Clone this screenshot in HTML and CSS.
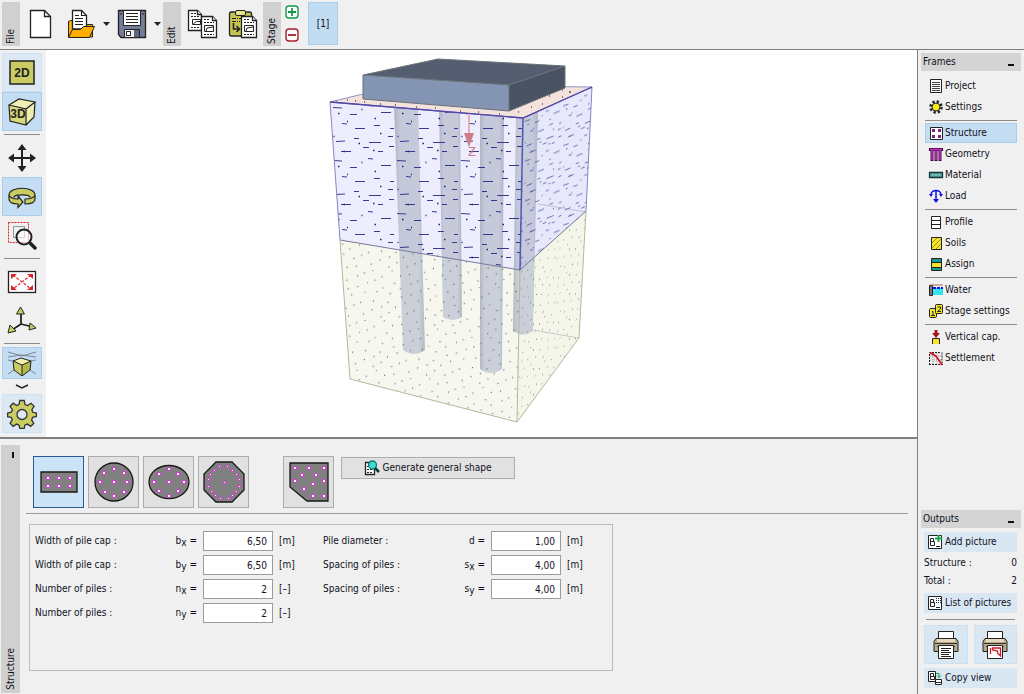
FILE: index.html
```html
<!DOCTYPE html>
<html lang="en">
<head>
<meta charset="utf-8">
<title>Pile group</title>
<link rel="stylesheet" href="styles.css">
</head>
<body>
<header class="toolbar">
  <span class="tab">File</span>
  <div class="tools">
    <button class="tool" aria-label="New"><svg width="40" height="40" viewBox="0 0 40 40"><path d="M9.500 6.500h14l6 6v21h-20z" fill="#fff" stroke="#222" stroke-width="1.300"/><path d="M23.500 6.500v6h6" fill="none" stroke="#222" stroke-width="1.300"/></svg></button>
    <button class="tool" aria-label="Open"><svg width="40" height="40" viewBox="0 0 40 40"><path d="M7.500 33V17.500l2-1h4l3 4h15V33z" fill="#ffae00" stroke="#222"/><path d="M11.500 25V6.500h9l5 5V25z" fill="#fff" stroke="#222" stroke-width="1.300"/><path d="M20.500 6.500v5h5M14 11.500h4m-4 3h8m-8 3h8m-8 3h8" fill="none" stroke="#222" stroke-width="1.200"/><path d="M7.500 33.500l4-8h8l3-3h11l-5 11z" fill="#ffae00" stroke="#222"/></svg></button>
    <button class="drop" aria-label="Open recent"><svg width="7" height="4"><path d="M0 0h7L3.500 4z" fill="#222"/></svg></button>
    <button class="tool" aria-label="Save"><svg width="40" height="40" viewBox="0 0 40 40"><path d="M6.500 6.500h27v27H9l-2.500-3z" fill="#757c98" stroke="#222" stroke-width="1.300"/><path d="M11.500 6.500h17v15h-17z" fill="#fff" stroke="#222"/><path d="M14 9.500h12m-12 3h12m-12 3h12m-12 3h12" stroke="#222"/><path d="M12.500 25.500h15v8h-15z" fill="#eee" stroke="#222"/><path d="M14.500 27.500h4v4h-4z" fill="#fff" stroke="#222"/><path d="M22 26h5v7h-5z" fill="#5f6682"/><path d="M9 9v2m22-2v2" stroke="#222"/></svg></button>
    <button class="drop" aria-label="Save as"><svg width="7" height="4"><path d="M0 0h7L3.500 4z" fill="#222"/></svg></button>
  </div>
  <span class="tab">Edit</span>
  <div class="tools">
    <button class="tool" aria-label="Copy"><svg width="40" height="40" viewBox="0 0 40 40"><g fill="#fff" stroke="#222" stroke-width="1.300"><path d="M5.500 6.500h9l4 4v16h-13z"/><path d="M14.500 6.500v4h4"/></g><path d="M8 9.500h5m-5 3h8m-8 11h8" stroke="#222" stroke-dasharray="2 1"/><path d="M9.500 15.500h8v5h-8zm1 4l3-2h4" fill="none" stroke="#222"/><g fill="#fff" stroke="#222" stroke-width="1.300"><path d="M18.500 12.500h11l4 4v17h-15z"/><path d="M29.500 12.500v4h4"/></g><path d="M21 15.500h6m-6 3h10m-10 12h10" stroke="#222" stroke-dasharray="2 1"/><path d="M21.500 21.500h9v6h-9z" fill="none" stroke="#222"/><path d="M23 27l1-3 6-1" fill="none" stroke="#222"/></svg></button>
    <button class="tool" aria-label="Paste"><svg width="40" height="40" viewBox="0 0 40 40"><rect x="6.500" y="8" width="22" height="24" rx="2" fill="#c6c552" stroke="#222" stroke-width="1.300"/><rect x="12.500" y="6.500" width="10" height="5" rx="1.500" fill="#e4e38c" stroke="#222"/><path d="M9 14.500h17m-17 3h8" stroke="#222" stroke-dasharray="4 1 1 1"/><path d="M10.500 19v6h5m-2-3l3 3-3 3" fill="none" stroke="#222" stroke-width="1.600"/><g fill="#fff" stroke="#222" stroke-width="1.300"><path d="M18.500 12.500h11l4 4v17h-15z"/><path d="M29.500 12.500v4h4"/></g><path d="M21 15.500h6m-6 3h10m-10 12h10" stroke="#222" stroke-dasharray="2 1"/><path d="M21.500 21.500h9v6h-9z" fill="none" stroke="#222"/><path d="M23 27l1-3 6-1" fill="none" stroke="#222"/></svg></button>
  </div>
  <span class="tab">Stage</span>
  <div class="stage-edit">
    <button class="mini" aria-label="Add stage"><svg width="14" height="14"><rect x="1" y="1" width="12" height="12" rx="3" fill="#fff" stroke="#16964a" stroke-width="1.400"/><path d="M3 7h8M7 3v8" stroke="#16964a" stroke-width="1.800"/></svg></button>
    <button class="mini" aria-label="Remove stage"><svg width="14" height="14"><rect x="1" y="1" width="12" height="12" rx="3" fill="#fff" stroke="#a5202c" stroke-width="1.400"/><path d="M3 7h8" stroke="#a5202c" stroke-width="1.800"/></svg></button>
  </div>
  <button class="stage-button">[1]</button>
</header>

<div class="body">
  <main class="work">
    <div class="upper">
      <nav class="side" aria-label="View tools">
        <button class="view soft" aria-label="2D view"><svg width="30" height="30" viewBox="0 0 30 30"><rect x="3" y="3" width="24" height="23" fill="#c9cb63" stroke="#222" stroke-width="1.500"/><text x="15" y="19" class="icon-text">2D</text></svg></button>
        <button class="view on" aria-label="3D view"><svg width="30" height="30" viewBox="0 0 30 30"><path d="M2 8l17 4v16L3 24z" fill="#d8d97c"/><path d="M2 8l10-6 16 3-9 7z" fill="#f0efb5"/><path d="M19 12l9-7-1 15-8 8z" fill="#eeecae"/><path d="M2 8l17 4v16L3 24zM2 8l10-6 16 3-9 7M28 5l-1 15-8 8" fill="none" stroke="#222" stroke-width="1.200"/><text x="11" y="21" class="icon-text">3D</text></svg></button>
        <hr>
        <button class="view" aria-label="Pan"><svg width="30" height="30" viewBox="0 0 30 30"><path d="M15 5v20M5 15h20" stroke="#222" stroke-width="2"/><path d="M15 1l4.500 6h-9zm0 28l4.500-6h-9zM1 15l6-4.500v9zm28 0l-6-4.500v9z" fill="#222"/></svg></button>
        <button class="view on" aria-label="Rotate"><svg width="30" height="30" viewBox="0 0 30 30"><path d="M2 13c0-9 26-9 26 0v4c0 3-4 5-10 5v-5c3 0 5-1 5-1.500C23 12 7 12 7 15.500c0 .5 2 1.500 4 1.500v-3l5 6-5 5.500V22c-6 0-9-2-9-5z" fill="#c9cb63"/><path d="M7 15.500C7 12 23 12 23 15.500c0 .5-1 1.500-5 1.500v-1H11v1c-2 0-4-1-4-1.500z" fill="#c4ddf3"/><path d="M2 13c0-9 26-9 26 0v4c0 3-4 5-10 5v-5c6 0 10-2 10-4M2 13c0 2 4 4 9 4v-3l5 6-5 5.500V22c-6 0-9-2-9-5zM7 15.500c0-3.500 16-3.500 16 0" fill="none" stroke="#222" stroke-width="1.200"/></svg></button>
        <button class="view" aria-label="Zoom window"><svg width="30" height="30" viewBox="0 0 30 30"><rect x="1.500" y="1.500" width="20" height="20" fill="none" stroke="#e0202c" stroke-dasharray="2 1"/><rect x="6.500" y="5.500" width="11" height="11" fill="none" stroke="#999"/><circle cx="17" cy="16" r="7.500" fill="#fff" fill-opacity=".6" stroke="#222" stroke-width="2"/><path d="M23 22l5 5" stroke="#222" stroke-width="3.500" stroke-linecap="round"/></svg></button>
        <hr>
        <button class="view" aria-label="Zoom all"><svg width="30" height="30" viewBox="0 0 30 30"><rect x="1.500" y="4.500" width="27" height="21" fill="#fff" stroke="#222" stroke-width="1.300"/><path d="M6 8l18 14M24 8L6 22" stroke="#e0202c" stroke-width="1.200" stroke-dasharray="3 1.500"/><path d="M4 7h6l-6 5zm22 0h-6l6 5zM4 23h6l-6-5zm22 0h-6l6-5z" fill="#e0202c"/></svg></button>
        <button class="view" aria-label="Axes"><svg width="30" height="30" viewBox="0 0 30 30"><path d="M14 5v13L5 24m9-6l12 3" fill="none" stroke="#222" stroke-width="1.800"/><path d="M13.500 1l4 7h-8zM1 27l2-8 6 6zm28-5l-6-5-1 7z" fill="#c9cb63" stroke="#222"/></svg></button>
        <hr>
        <button class="view on short" aria-label="Perspective"><svg width="30" height="26" viewBox="0 0 30 26"><path d="M6 11l8-3 10 3-9 4z" fill="#f3f1ac"/><path d="M6 11l9 4v11l-8-6z" fill="#c9cb63"/><path d="M15 15l9-4-1 9-8 6z" fill="#b5b84e"/><path d="M6 11l8-3 10 3-1 9-8 6-8-6zm0 0l9 4 9-4m-9 4v11" fill="none" stroke="#222"/><path d="M1 2l14 4 14-4M1 7l13-2 15 2M1 10l5 1m18 0l5-1M1 24l6-4m16 0l6 4" fill="none" stroke="#68737d" stroke-width=".8"/></svg></button>
        <button class="more" aria-label="More"><svg width="14" height="5"><path d="M1 1l6 3 6-3" fill="none" stroke="#222" stroke-width="1.500"/></svg></button>
        <button class="view soft" aria-label="Drawing settings"><svg width="30" height="30" viewBox="0 0 30 30"><path d="M12.800 1.500h4.400l.8 4 2.600 1.100 3.400-2.300 3.100 3.100-2.300 3.400 1.100 2.500 3.600.7v3.500l-3.800.8-1.100 2.600 2.200 3.400-3.100 3.100-3.300-2.300-2.600 1.100-.6 3.300h-4.400l-.7-3.300-2.600-1.100-3.300 2.200-3.100-3.100 2.200-3.300-1.100-2.600-3.600-.7v-3.600l3.700-.8 1.100-2.500-2.300-3.400 3.100-3.100 3.300 2.300 2.600-1.100z" fill="#c9cb63" stroke="#333" stroke-width="1.300"/><circle cx="15" cy="15.500" r="5" fill="#dce8f3" stroke="#333" stroke-width="1.300"/></svg></button>
      </nav>
      <section class="viewport" aria-label="3D model">
        <svg class="scene" viewBox="46 50 871 387">
          <defs>
            <g id="dashes" fill="none"><path d="M3 5.500l9 .5m8 6.500h7m11-9l5 .5m8 6.500h10m-49 11l5 .5m8 4.500h10m9-3h6m10 3h4m-58 13l9-.5m9-2.500h5m10 4h12m7-6h5m-52 15h10m12-4h6m9 4h5m6-5h8" stroke="#23297f" stroke-width=".9"/><path d="M8 11.500h1.500m22-4h1m12 9h1.500m-29 3h1m32 12h1.500m-48 3h1m24 7h1.500m13 7h1.500m-31 1h1.500" stroke="#1d2470" stroke-width="1.500"/></g>
            <g id="grains"><path d="M3 4h1m8 4h1m9-6h1m10 7h1m13-4h1m9 5h1M6 15h1m11 3h1m7-5h1m11 8h1m8-6h1m10 6h1M2 25h1m9 4h1m9-3h1m9 6h1m8-4h1m10 5h1M7 38h1m6 5h1m10-7h1m11 6h1m7-4h1m9 7h1M4 50h1m12 2h1m9-4h1m8 5h1m12-3h1" stroke="#4c4c44" stroke-width="1.300"/></g>
            <pattern id="clay-front" width="64" height="53" patternUnits="userSpaceOnUse" patternTransform="translate(330 102)"><use href="#dashes"/></pattern>
            <pattern id="clay-side" width="64" height="53" patternUnits="userSpaceOnUse" patternTransform="translate(523 118) skewY(-22) scale(.6 .75)"><use href="#dashes"/></pattern>
            <pattern id="sand-front" width="60" height="56" patternUnits="userSpaceOnUse" patternTransform="translate(340 240) rotate(9) scale(.9)"><use href="#grains"/></pattern>
            <pattern id="sand-side" width="60" height="56" patternUnits="userSpaceOnUse" patternTransform="translate(520 270) skewY(-40) scale(.6 .8)"><use href="#grains"/></pattern>
            <linearGradient id="pile"><stop stop-color="#b3b8c2"/><stop offset=".2" stop-color="#cbcfd8"/><stop offset=".8" stop-color="#cbcfd8"/><stop offset="1" stop-color="#b3b8c2"/></linearGradient>
          </defs>
          <path d="M330 102l193 16-3 152-180-30z" fill="#f6f6fd"/>
          <path d="M523 118l69-31-6 124-66 59z" fill="#f0f0fb"/>
          <path d="M340 240l180 30-3 152-167-43z" fill="#f6f8f0"/>
          <path d="M520 270l66-59-7 127-62 84z" fill="#f4f6ea"/>
          <path d="M538 204l48 8M533 330l46 8" stroke="#c7c8cf"/>
          <path d="M516 116l22-5-5 220q-10 7-20 0z" fill="url(#pile)"/>
          <path d="M439 108h21l2 209q-9 6-19 0z" fill="url(#pile)"/>
          <path d="M394 106h24l7 244q-11 8-22 0z" fill="url(#pile)"/>
          <path d="M480 112h24l-2 257q-11 8-22 0z" fill="url(#pile)"/>
          <path d="M330 102l193 16-3 152-180-30z" fill="#7c86ff" fill-opacity=".07"/>
          <path d="M523 118l69-31-6 124-66 59z" fill="#7c86ff" fill-opacity=".08"/>
          <path d="M330 102l193 16-3 152-180-30z" fill="url(#clay-front)"/>
          <path d="M523 118l69-31-6 124-66 59z" fill="url(#clay-side)"/>
          <path d="M340 240l180 30-3 152-167-43z" fill="url(#sand-front)"/>
          <path d="M520 270l66-59-7 127-62 84z" fill="url(#sand-side)"/>
          <path d="M340 240l10 139 167 43 62-84 7-127M520 270l-3 152" fill="none" stroke="#b6b798"/>
          <path d="M340 240l180 30 66-59" fill="none" stroke="#77789b"/>
          <path d="M330 102l70-17 192 2-69 31z" fill="#f4e2dc" stroke="#9090c8"/>
          <path d="M336 102h1m10-2h1m7 1h1m8 1h1m15 2h1m14 1h1m20 2h1m18 1h1m24 3h1m17 1h1m20 2h1m18-2h1m12-5h1m10-3h1m-18 0h1m13-6h1m9-2h1m12 1h1m6-5h1m-18-1h1m9-1h1m7 2h1" stroke="#555" stroke-width="1.500"/>
          <path d="M340 240l-10-138 193 16 69-31-6 124" fill="none" stroke="#8585c5"/>
          <path d="M330 102l193 16 69-31" fill="none" stroke="#5147a8" stroke-width="1.300"/>
          <path d="M523 118l-3 152" stroke="#5056b4" stroke-width="1.500"/>
          <path d="M363 75l146 10v26l-146-12z" fill="#8495b3"/>
          <path d="M363 75l75-16 127 7-56 19z" fill="#555e70"/>
          <path d="M509 85l56-19v22l-56 23z" fill="#4a5363"/>
          <path d="M363 75l75-16 127 7v22l-56 23-146-12zl146 10 56-19m-56 19v26" fill="none" stroke="#6b7278"/>
          <path d="M469 115v18" stroke="#dc9da5" stroke-width="1.500"/><path d="M464 133h10l-5 14z" fill="#cf7c86"/>
          <text x="468" y="156" class="axis">Z</text>
        </svg>
      </section>
    </div>

    <section class="lower">
      <div class="frame-tab"><i class="pin"></i><span>Structure</span></div>
      <div class="editor">
        <div class="shapes">
          <button class="shape chosen" aria-label="Rectangular cap"><svg width="42" height="42"><path d="M3 11h36v20H3z" fill="#808080" stroke="#181818" stroke-width="1.300"/><path class="dot" d="M8.500 15.500h3v3h-3zm11 0h3v3h-3zm11 0h3v3h-3zm-22 8h3v3h-3zm11 0h3v3h-3zm11 0h3v3h-3z"/></svg></button>
          <button class="shape" aria-label="Circular cap"><svg width="42" height="42"><circle cx="21" cy="21" r="19" fill="#808080" stroke="#181818" stroke-width="1.300"/><path class="dot" d="M19.500 6.500h3v3h-3zm-10 4h3v3h-3zm20 0h3v3h-3zm-24 9h3v3h-3zm14 0h3v3h-3zm13 0h3v3h-3zm-22 10h3v3h-3zm19 0h3v3h-3zm-10 4h3v3h-3z"/></svg></button>
          <button class="shape" aria-label="Elliptical cap"><svg width="42" height="42"><ellipse cx="21" cy="21" rx="20" ry="16.500" fill="#808080" stroke="#181818" stroke-width="1.300"/><path class="dot" d="M19.500 6.500h3v3h-3zm-10 5h3v3h-3zm19 0h3v3h-3zm-24 8h3v3h-3zm15 0h3v3h-3zm15 0h3v3h-3zm-25 9h3v3h-3zm19 0h3v3h-3zm-9 5h3v3h-3z"/></svg></button>
          <button class="shape" aria-label="Octagonal cap"><svg width="42" height="42"><path d="M13 1h16l12 12v16L29 41H13L1 29V13z" fill="#808080" stroke="#181818" stroke-width="1.300"/><path class="dot" d="M15.500 4.500h2v2h-2zm8 0h2v2h-2zm-13 4h2v2h-2zm18 0h2v2h-2zm-22 4h2v2h-2zm26 0h2v2h-2zm-28 5h2v2h-2zm31 0h2v2h-2zm-15 3h2v2h-2zm-16 4h2v2h-2zm31 0h2v2h-2zm-28 5h2v2h-2zm25 0h2v2h-2zm-21 4h2v2h-2zm17 0h2v2h-2zm-12 3h2v2h-2zm8 0h2v2h-2z"/></svg></button>
          <button class="shape apart" aria-label="General cap"><svg width="42" height="42"><path d="M2 2h38v38H19L2 26z" fill="#808080" stroke="#181818" stroke-width="1.300"/><path class="dot" d="M5.500 5.500h3v3h-3zm14 0h3v3h-3zm15 0h3v3h-3zm-22 7h3v3h-3zm14 0h3v3h-3zm-21 6h3v3h-3zm29 0h3v3h-3zm-11 3h3v3h-3zm-9 5h3v3h-3zm9 7h3v3h-3zm11 0h3v3h-3z"/></svg></button>
          <button class="generate"><svg width="16" height="16"><path d="M1.500 2.500h9v12h-9z" fill="#fff" stroke="#222" stroke-width="1.300"/><path d="M3 6.500h2m-2 3h6m-6 3h6" stroke="#222" stroke-dasharray="2 1"/><circle cx="8.500" cy="5" r="4" fill="#48d8cf" stroke="#087878" stroke-width="1.300"/><path d="M11 8l4 4" stroke="#14373a" stroke-width="2.500"/></svg>Generate general shape</button>
        </div>
        <form class="group">
          <div class="fields">
            <label for="bx">Width of pile cap :</label><span class="sym">b<sub>x</sub> =</span><input id="bx" value="6,50"><span>[m]</span>
            <label for="by">Width of pile cap :</label><span class="sym">b<sub>y</sub> =</span><input id="by" value="6,50"><span>[m]</span>
            <label for="nx">Number of piles :</label><span class="sym">n<sub>x</sub> =</span><input id="nx" value="2"><span>[–]</span>
            <label for="ny">Number of piles :</label><span class="sym">n<sub>y</sub> =</span><input id="ny" value="2"><span>[–]</span>
          </div>
          <div class="fields">
            <label for="d">Pile diameter :</label><span class="sym">d =</span><input id="d" value="1,00"><span>[m]</span>
            <label for="sx">Spacing of piles :</label><span class="sym">s<sub>x</sub> =</span><input id="sx" value="4,00"><span>[m]</span>
            <label for="sy">Spacing of piles :</label><span class="sym">s<sub>y</sub> =</span><input id="sy" value="4,00"><span>[m]</span>
          </div>
        </form>
      </div>
    </section>
  </main>

  <aside class="panel">
    <div class="heading"><span>Frames</span><button class="collapse" aria-label="Collapse frames"></button></div>
    <nav class="frames">
      <button class="frame"><svg width="16" height="16"><path d="M2.500 1.500h11v13h-11z" fill="#fff" stroke="#222"/><path d="M4 4.500h8m-8 2h8m-8 2h8m-8 2h8m-8 2h8" stroke="#444"/></svg>Project</button>
      <button class="frame"><svg width="16" height="16"><circle cx="8" cy="8" r="5.500" fill="none" stroke="#222" stroke-width="2.500" stroke-dasharray="2.320 2"/><circle cx="8" cy="8" r="4" fill="#f8ed19" stroke="#222"/></svg>Settings</button>
      <hr>
      <button class="frame current"><svg width="16" height="16"><path d="M2.500 2.500h12v12h-12z" fill="#fff" stroke="#222"/><path d="M4 4h3v3H4zm6 0h3v3h-3zm-6 6h3v3H4zm6 0h3v3h-3z" fill="#80207f"/></svg>Structure</button>
      <button class="frame"><svg width="16" height="16"><path d="M1 3.500h14M4 5v10m4-10v10m4-10v10" stroke="#3a083a" stroke-width="3"/><path d="M2 3.500h12M4 4v10m4-10v10m4-10v10" stroke="#c12cc1" stroke-width="1.500"/></svg>Geometry</button>
      <button class="frame"><svg width="16" height="16"><path d="M1.500 5.500h13v5h-13z" fill="#58a5a1" stroke="#16383b" stroke-width="1.300"/><path d="M4 8h8" stroke="#9bd3cc" stroke-dasharray="2 1"/></svg>Material</button>
      <button class="frame"><svg width="16" height="16"><path d="M8 3v9M3 7c0-6 10-6 10 0" fill="none" stroke="#1111e8" stroke-width="1.500"/><path d="M5 11h6l-3 4zM1 6h4L3 9zm10 0h4l-2 3z" fill="#1111e8"/></svg>Load</button>
      <hr>
      <button class="frame"><svg width="16" height="16"><path d="M3.500 2.500h9v12h-9zm0 4h9m-9 4h9" fill="#fff" stroke="#222"/></svg>Profile</button>
      <button class="frame"><svg width="16" height="16"><path d="M3.500 2.500h10v12h-10z" fill="#f6e42c" stroke="#222"/><path d="M4 8l5-5M4 13L13 4M8 14l5-5" stroke="#9c8d14"/></svg>Soils</button>
      <button class="frame"><svg width="16" height="16"><path d="M3.500 2.500h10v12h-10z" fill="#159a91" stroke="#222"/><path d="M4 7h9v4H4z" fill="#f6e42c"/><path d="M3 6.500h10M3 11.500h10" stroke="#222"/></svg>Assign</button>
      <hr>
      <button class="frame"><svg width="16" height="16"><path d="M5 6h10v7H5z" fill="#31e4ef"/><path d="M1.500 3.500h3v10h-3z" fill="#777" stroke="#222"/><path d="M2 3h13" stroke="#a66"/><path d="M5 6h10" stroke="#1111e8" stroke-width="2" stroke-dasharray="3 1"/></svg>Water</button>
      <button class="frame"><svg width="16" height="16"><g fill="#f6e42c" stroke="#222"><rect x="1.500" y="5.500" width="7" height="9" rx="1"/><rect x="7.500" y="1.500" width="7" height="9" rx="1"/></g><path d="M4 8.500h1v4m-2 0h4M9.500 4h3v2l-3 2.500h3.500" fill="none" stroke="#222"/></svg>Stage settings</button>
      <hr>
      <button class="frame"><svg width="16" height="16"><path d="M8 1v5" stroke="#a51220" stroke-width="3"/><path d="M4 4h8L8 9z" fill="#a51220"/><path d="M4.500 15V9.500h7V15" fill="#f6e42c" stroke="#222"/><path d="M8 10v5" stroke="#f6e42c" stroke-width="3"/></svg>Vertical cap.</button>
      <button class="frame"><svg width="16" height="16"><path d="M1.500 15V2.500H13m1 0V15M1 14.500h14" fill="none" stroke="#222" stroke-dasharray="2 1"/><path d="M2 6h12M2 10h12M5 3v11m4-11v11" stroke="#999" stroke-dasharray="1 1"/><path d="M2 3c6 1 8 6 12 12" fill="none" stroke="#d51927" stroke-width="1.800"/></svg>Settlement</button>
    </nav>
    <div class="heading bottom"><span>Outputs</span><button class="collapse" aria-label="Collapse outputs"></button></div>
    <div class="outputs">
      <button class="out"><svg width="16" height="16"><path d="M1.500 1.500h13v13h-13z" fill="#fff" stroke="#222"/><path d="M3.500 4.500h3v3h-3zm0 3h4v4h-4zM9 12.500h4" fill="none" stroke="#222"/><path d="M11.500 1v7M8 4.500h7" stroke="#13a345" stroke-width="2"/></svg>Add picture</button>
      <div class="count"><span>Structure :</span><span>0</span></div>
      <div class="count"><span>Total :</span><span>2</span></div>
      <button class="out"><svg width="16" height="16"><path d="M1.500 1.500h13v13h-13z" fill="#fff" stroke="#222"/><path d="M3.500 4.500h3v3h-3zm0 3h4v4h-4zM9 12.500h4" fill="none" stroke="#222"/><path d="M9 3.500h5m-5 2h5m-5 2h5" stroke="#222" stroke-dasharray="1 1"/></svg>List of pictures</button>
      <hr>
      <div class="prints">
        <button class="print" aria-label="Print document"><svg width="26" height="30" viewBox="0 0 26 30"><path d="M5.500 9V1.500h15V9" fill="#fff" stroke="#222"/><path d="M3 8.500h20l2 3v10H1v-10z" fill="#b9a98b" stroke="#222"/><path d="M4 9h18v3H4z" fill="#e5d9c0"/><path d="M2 13.500h22M4 16.500h18" stroke="#37332b"/><path d="M5.500 15.500h15v13h-15z" fill="#fff" stroke="#222"/><path d="M8 18.500h10m-10 2h8m-8 2h10m-10 2h8m-8 2h10" stroke="#222"/></svg></button>
        <button class="print" aria-label="Print picture"><svg width="26" height="30" viewBox="0 0 26 30"><path d="M5.500 9V1.500h15V9" fill="#fff" stroke="#222"/><path d="M3 8.500h20l2 3v10H1v-10z" fill="#b9a98b" stroke="#222"/><path d="M4 9h18v3H4z" fill="#e5d9c0"/><path d="M2 13.500h22M4 16.500h18" stroke="#37332b"/><path d="M5.500 15.500h15v13h-15z" fill="#fff" stroke="#222"/><path d="M8.500 18v6m2-6h8v8l-3-3v-2l-5-1z" fill="none" stroke="#d51927" stroke-width="1.300"/></svg></button>
      </div>
      <button class="out"><svg width="16" height="16"><path d="M1.500 1.500h7v10h-7z" fill="#fff" stroke="#222"/><path d="M3.500 3.500h3v3h-3zm0 3h4v3h-4z" fill="none" stroke="#222"/><path d="M9 3.500h3v4m-2-2l2 2 2-2" fill="none" stroke="#13a345"/><path d="M8.500 9.500h6v5h-6zm0 3h6" fill="#fff" stroke="#222"/></svg>Copy view</button>
    </div>
  </aside>
</div>
</body>
</html>
```

FILE: styles.css
```css
* { box-sizing: border-box; }
body {
  margin: 0;
  min-height: 100vh;
  display: flex;
  flex-direction: column;
  background: #f0f0f0;
  color: #10101c;
  font: 10px/14px "DejaVu Sans Condensed", "Noto Sans", sans-serif;
}
button {
  display: flex;
  align-items: center;
  justify-content: center;
  margin: 0;
  padding: 0;
  border: 0;
  background: none;
  color: inherit;
  font: inherit;
}
svg { display: block; flex: none; }
hr { width: 100%; height: 1px; margin: 0; border: 0; background: #8c8c8c; }

.toolbar { display: flex; padding: 2px 2px 3px; border-bottom: 1px solid #808080; }
.tab {
  width: 18px;
  height: 44px;
  padding-top: 2px;
  background: #d0d0d0;
  writing-mode: vertical-rl;
  transform: rotate(180deg);
  line-height: 18px;
}
.tools { display: flex; align-items: center; padding-left: 1px; }
.tools + .tab + .tools { padding-left: 2px; }
.tool { width: 40px; height: 44px; }
.drop { width: 11px; height: 44px; }
.stage-edit { display: flex; flex-direction: column; gap: 9px; padding: 3px 5px 3px 4px; }
.stage-button { width: 30px; height: 43px; margin-left: 4px; border: 1px solid #a9cdec; background: #c2dcf2; }

.body { flex: 1; display: flex; }
.work { flex: 1; min-width: 0; display: flex; flex-direction: column; }
.upper { flex: 1; display: flex; min-height: 0; }
.side { width: 46px; padding: 3px 4px 4px 2px; display: flex; flex-direction: column; }
.side hr { margin: 3px 2px; width: 36px; }
.view { width: 40px; height: 39px; border: 1px solid transparent; }
.view.soft { background: #dce8f3; border-color: #d0e2f2; }
.view.on { background: #c4ddf3; border-color: #a9cdec; }
.view.short { height: 32px; }
.more { width: 40px; height: 15px; }
.icon-text { font: bold 12px "Liberation Sans", sans-serif; text-anchor: middle; fill: #222; }
.viewport { flex: 1; background: #fff; display: flex; }
.scene { flex: 1; min-width: 0; height: 387px; }
.axis { font: 13px "Liberation Sans", sans-serif; fill: #d27a86; }

.lower { display: flex; border-top: 2px solid #808080; padding: 6px 9px 2px 1px; }
.frame-tab {
  width: 19px;
  background: #d0d0d0;
  display: flex;
  flex-direction: column;
  justify-content: space-between;
  align-items: center;
  padding: 7px 0 3px;
}
.frame-tab span { writing-mode: vertical-rl; transform: rotate(180deg); }
.pin { width: 2px; height: 6px; margin-left: 4px; background: #111; }
.editor { flex: 1; padding: 11px 0 22px 6px; }
.shapes { display: flex; gap: 4px; padding: 0 0 5px 7px; border-bottom: 1px solid #9c9c9c; }
.shape { width: 51px; height: 52px; border: 1px solid #adadad; background: #e1e1e1; }
.shape.chosen { background: #cbe3f7; border-color: #2a5a96; }
.shape.apart { margin-left: 30px; }
.generate { width: 174px; height: 22px; margin: 1px 0 0 3px; gap: 2px; border: 1px solid #adadad; background: #e1e1e1; }
.dot { fill: #fff; stroke: #d03ad0; stroke-width: 1; }
.group {
  display: flex;
  gap: 26px;
  width: 584px;
  max-width: 100%;
  min-height: 147px;
  margin: 10px 0 0 3px;
  padding: 6px 5px;
  border: 1px solid #bcbcbc;
}
.fields {
  display: grid;
  grid-template-columns: 114px 42px 70px 18px;
  grid-auto-rows: 20px;
  column-gap: 6px;
  row-gap: 4px;
  align-content: start;
  align-items: center;
}
.sym { text-align: right; white-space: nowrap; }
.sym sub { font-size: 10px; line-height: 0; vertical-align: -2px; }
.fields input {
  width: 100%;
  height: 20px;
  padding: 0 5px;
  border: 1px solid #9c9c9c;
  background: #fff;
  color: inherit;
  font: inherit;
  text-align: right;
}

.panel { width: 107px; padding: 3px 3px 7px; border-left: 1px solid #808080; display: flex; flex-direction: column; }
.heading { display: flex; justify-content: space-between; height: 18px; padding: 2px 7px 2px 2px; background: #d4d4d4; }
.heading.bottom { margin-top: auto; }
.collapse { width: 6px; height: 11px; border-bottom: 2px solid #111; }
.frames { display: flex; flex-direction: column; gap: 1px; padding: 5px 4px; }
.frames hr { margin: 2px 0 1px; }
.frame { height: 20px; justify-content: flex-start; gap: 1px; padding: 0 2px; border: 1px solid transparent; white-space: nowrap; }
.frame.current { background: #c4ddf3; border-color: #a9cdec; }
.outputs { display: flex; flex-direction: column; padding: 4px 4px 0 3px; }
.out { height: 20px; justify-content: flex-start; gap: 2px; padding: 0 3px; background: #d9e7f3; white-space: nowrap; }
.count { display: flex; justify-content: space-between; height: 18px; padding: 4px 0 0; }
.count + .out { margin-top: 5px; }
.outputs hr { margin: 6px 2px 5px; width: auto; }
.prints { display: flex; gap: 6px; margin-bottom: 4px; }
.print { flex: 1; height: 39px; background: #d9e7f3; border: 1px solid #cfe0ef; }
```
